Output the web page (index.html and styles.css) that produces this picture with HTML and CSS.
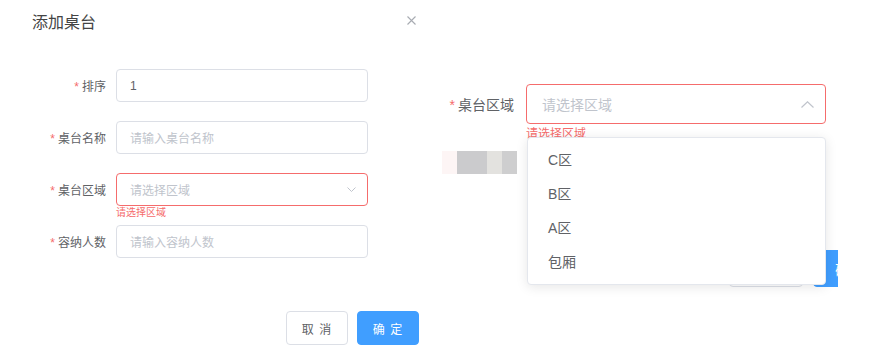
FILE: index.html
```html
<!DOCTYPE html>
<html lang="zh-CN">
<head>
  <meta charset="UTF-8" />
  <meta name="viewport" content="width=device-width, initial-scale=1.0" />
  <title>添加桌台</title>
  <link rel="stylesheet" href="styles.css">
</head>
<body>
  <div class="page">
    <div class="dialog">
      <div class="dialog-header">
        <span class="dialog-title">添加桌台</span>
        <svg class="close" width="9" height="9" viewBox="0 0 9 9"><path d="M0.5 0.5L8.5 8.5M8.5 0.5L0.5 8.5" stroke="#a8abb2" stroke-width="1.1" fill="none"/></svg>
      </div>

      <div class="form">
        <div class="form-item">
          <div class="label"><span class="star">*</span>排序</div>
          <div class="input">1</div>
        </div>
        <div class="form-item">
          <div class="label"><span class="star">*</span>桌台名称</div>
          <div class="input placeholder">请输入桌台名称</div>
        </div>
        <div class="form-item">
          <div class="label"><span class="star">*</span>桌台区域</div>
          <div class="field">
            <div class="input placeholder is-error">
              请选择区域
              <svg class="arrow" width="9" height="5" viewBox="0 0 9 5"><path d="M0.5 0.5L4.5 4.5L8.5 0.5" stroke="#c0c4cc" stroke-width="1" fill="none"/></svg>
            </div>
            <div class="error">请选择区域</div>
          </div>
        </div>
        <div class="form-item">
          <div class="label"><span class="star">*</span>容纳人数</div>
          <div class="input placeholder">请输入容纳人数</div>
        </div>
      </div>

      <div class="footer">
        <button class="btn">取 消</button>
        <button class="btn btn-primary">确 定</button>
      </div>
    </div>

    <div class="zoom">
      <div class="zoom-item">
        <div class="zoom-label"><span class="star">*</span>桌台区域</div>
        <div class="field">
          <div class="zoom-select">
            请选择区域
            <svg class="arrow-up" width="13" height="7" viewBox="0 0 13 7"><path d="M0.5 6.5L6.5 0.8L12.5 6.5" stroke="#c0c4cc" stroke-width="1.2" fill="none"/></svg>
          </div>
          <div class="zoom-error">请选择区域</div>
        </div>
      </div>

      <div class="blur">
        <span class="px px-1"></span>
        <span class="px px-2"></span>
        <span class="px px-3"></span>
        <span class="px px-4"></span>
      </div>

      <div class="zoom-footer">
        <button class="zbtn">取 消</button>
        <button class="zbtn zbtn-primary">确 定</button>
      </div>

      <ul class="dropdown">
        <li>C区</li>
        <li>B区</li>
        <li>A区</li>
        <li>包厢</li>
      </ul>
    </div>
  </div>
</body>
</html>
```

FILE: styles.css
```css
body {
  margin: 0;
  background: #fff;
  font-family: 'Liberation Sans', 'Noto Sans CJK SC', sans-serif;
  color: #606266;
  overflow: hidden;
}

.page {
  display: flex;
  height: 362px;
}

/* left dialog */
.dialog {
  width: 440px;
  box-sizing: border-box;
  padding: 11px 21px 0 32px;
}

.dialog-header {
  display: flex;
  justify-content: space-between;
  align-items: flex-start;
}

.dialog-title {
  font-size: 16px;
  line-height: 24px;
  color: #444;
}

.close {
  margin: 5px 3px 0 0;
}

.form {
  padding-top: 34px;
  display: flex;
  flex-direction: column;
  gap: 19px;
}

.form-item {
  display: flex;
  align-items: center;
}

.label {
  width: 84px;
  box-sizing: border-box;
  padding-right: 10px;
  text-align: right;
  font-size: 12px;
  color: #606266;
}

.star {
  color: #f56c6c;
  margin-right: 3px;
}

.field {
  position: relative;
}

.input {
  width: 252px;
  height: 33px;
  box-sizing: border-box;
  border: 1px solid #dcdfe6;
  border-radius: 4px;
  padding: 0 13px;
  display: flex;
  align-items: center;
  justify-content: space-between;
  font-size: 12px;
  color: #606266;
}

.placeholder {
  color: #c0c4cc;
}

.is-error {
  border-color: #f56c6c;
}

.arrow {
  margin-right: -2px;
}

.error {
  position: absolute;
  top: 35px;
  left: 0;
  font-size: 10px;
  line-height: 1;
  color: #f56c6c;
}

.footer {
  margin-top: 53px;
  display: flex;
  justify-content: flex-end;
  gap: 9px;
}

.btn {
  width: 62px;
  height: 34px;
  border: 1px solid #dcdfe6;
  border-radius: 4px;
  background: #fff;
  color: #606266;
  font-family: inherit;
  font-size: 12px;
  letter-spacing: 1px;
  cursor: pointer;
}

.btn-primary {
  background: #409eff;
  border-color: #409eff;
  color: #fff;
}

/* enlarged select on the right */
.zoom {
  position: relative;
  width: 398px;
  height: 362px;
  overflow: hidden;
  padding-top: 84px;
  box-sizing: border-box;
}

.zoom-item {
  display: flex;
  align-items: center;
}

.zoom-label {
  width: 86px;
  box-sizing: border-box;
  padding: 0 12px 0 6px;
  text-align: right;
  font-size: 14px;
  white-space: nowrap;
  color: #606266;
}

.zoom-select {
  width: 300px;
  height: 40px;
  box-sizing: border-box;
  border: 1px solid #f56c6c;
  border-radius: 4px;
  padding: 0 11px 0 15px;
  display: flex;
  align-items: center;
  justify-content: space-between;
  font-size: 14px;
  color: #c0c4cc;
}

.zoom-error {
  position: absolute;
  top: 44px;
  left: 0;
  font-size: 12px;
  line-height: 1;
  color: #f56c6c;
}

.blur {
  display: flex;
  margin: 27px 0 0 2px;
  height: 23px;
}

.px {
  display: block;
  height: 23px;
}

.px-1 { width: 15px; background: #fdf5f5; }
.px-2 { width: 30px; background: #cbcbcd; }
.px-3 { width: 15px; background: #e3e2df; }
.px-4 { width: 15px; background: #cececf; }

.zoom-footer {
  margin: 76px 0 0 289px;
  display: flex;
  gap: 10px;
}

.zbtn {
  flex-shrink: 0;
  width: 74px;
  height: 37px;
  border: 1px solid #dcdfe6;
  border-radius: 4px;
  background: #fff;
  color: #606266;
  font-family: inherit;
  font-size: 14px;
  text-align: left;
  padding-left: 20px;
}

.zbtn-primary {
  width: 80px;
  background: #409eff;
  border-color: #409eff;
  color: #fff;
  padding-left: 21px;
}

.dropdown {
  position: absolute;
  left: 87px;
  top: 137px;
  width: 299px;
  box-sizing: border-box;
  margin: 0;
  padding: 5px 0;
  list-style: none;
  background: #fff;
  border: 1px solid #e4e7ed;
  border-radius: 4px;
  box-shadow: 0 2px 12px rgba(0, 0, 0, 0.1);
}

.dropdown li {
  height: 34px;
  line-height: 34px;
  padding: 0 20px;
  font-size: 14px;
  color: #606266;
}
```
